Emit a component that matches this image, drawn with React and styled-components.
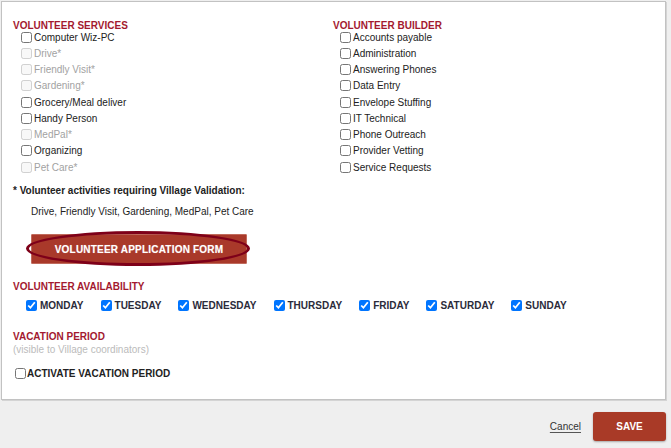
import React from 'react';
import styled, { createGlobalStyle } from 'styled-components';

const GlobalStyle = createGlobalStyle`
  html, body {
    margin: 0;
    padding: 0;
    background: #efefef;
    font-family: 'Liberation Sans', Arial, sans-serif;
  }
`;

const Page = styled.div`
  width: 671px;
  height: 448px;
  display: flex;
  flex-direction: column;
  box-sizing: border-box;
  padding: 1px 0 0 1px;
`;

const Panel = styled.div`
  width: 665px;
  height: 399px;
  box-sizing: border-box;
  background: #fff;
  border: 1px solid #c2c2c2;
  box-shadow: 1px 1px 0 #d4d4d4;
  padding: 18px 11px 0 11px;
`;

const Columns = styled.div`
  display: grid;
  grid-template-columns: 320px 1fr;
`;

const Heading = styled.div`
  color: #a3192f;
  font-size: 10px;
  font-weight: bold;
  line-height: 12px;
`;

const Note = styled.div`
  color: #bbb;
  font-size: 10px;
  line-height: 12px;
  margin-top: 1px;
`;

const List = styled.div`
  display: flex;
  flex-direction: column;
  padding-left: ${p => p.$indent}px;
  margin-top: -3px;
`;

const Item = styled.label`
  display: flex;
  align-items: center;
  height: 16.25px;
  font-size: 10px;
  color: ${p => (p.$disabled ? '#a2a2a2' : '#222')};
  gap: 1px;
`;

const Box = styled.input.attrs({ type: 'checkbox' })`
  width: 11px;
  height: 11px;
  margin: 0 ${p => p.$gap ?? 1}px 0 0;
`;

const Validation = styled.div`
  margin-top: 10px;
  font-size: 10px;
  font-weight: bold;
  color: #222;
  line-height: 12px;
`;

const ValidationList = styled.div`
  margin-top: 9px;
  padding-left: 18px;
  font-size: 10px;
  color: #222;
  line-height: 12px;
`;

const FormButtonWrap = styled.div`
  padding: 16px 0 0 18px;
`;

const FormButton = styled.button`
  position: relative;
  width: 216px;
  height: 30px;
  background: #a9392a;
  border: 1px solid #c06a5c;
  border-radius: 1px;
  color: #fff;
  font-family: 'Liberation Sans', Arial, sans-serif;
  font-size: 10px;
  font-weight: bold;
  letter-spacing: 0.2px;
  text-shadow: 0 0 1px rgba(255, 255, 255, 0.4);
  padding: 0;
  cursor: pointer;

  /* hand-drawn ring around the button */
  &::after {
    content: '';
    position: absolute;
    left: -6px;
    right: -4px;
    top: -4px;
    bottom: -3px;
    border: 3px solid #7e0019;
    border-radius: 50%;
    pointer-events: none;
  }
`;

const Section = styled.div`
  margin-top: ${p => p.$top}px;
`;

const Days = styled.div`
  display: flex;
  align-items: center;
  padding-left: 13px;
  margin-top: 5px;
  gap: 17px;
`;

const Day = styled.label`
  display: flex;
  align-items: center;
  font-size: 10px;
  font-weight: bold;
  color: #2b2b3a;
  height: 14px;
`;

const Activate = styled.label`
  display: flex;
  align-items: center;
  margin: 10px 0 0 2px;
  font-size: 10px;
  font-weight: bold;
  color: #222;
  height: 14px;
`;

const Footer = styled.div`
  flex: 1;
  display: flex;
  align-items: flex-start;
  justify-content: flex-end;
  gap: 12px;
  padding: 12px 5px 0 0;
`;

const CancelLink = styled.a`
  font-size: 10px;
  color: #333;
  text-decoration: underline;
  text-decoration-color: #555;
  text-underline-offset: 2px;
  margin-top: 9px;
  cursor: pointer;
`;

const SaveButton = styled.button`
  width: 73px;
  height: 29px;
  background: #a93a27;
  border: none;
  border-radius: 3px;
  box-shadow: 0 1px 2px rgba(0, 0, 0, 0.3);
  color: #fff;
  font-family: 'Liberation Sans', Arial, sans-serif;
  font-size: 10px;
  font-weight: bold;
  padding: 0;
`;

const services = [
  ['Computer Wiz-PC', false],
  ['Drive*', true],
  ['Friendly Visit*', true],
  ['Gardening*', true],
  ['Grocery/Meal deliver', false],
  ['Handy Person', false],
  ['MedPal*', true],
  ['Organizing', false],
  ['Pet Care*', true],
];

const builder = [
  'Accounts payable',
  'Administration',
  'Answering Phones',
  'Data Entry',
  'Envelope Stuffing',
  'IT Technical',
  'Phone Outreach',
  'Provider Vetting',
  'Service Requests',
];

const days = ['MONDAY', 'TUESDAY', 'WEDNESDAY', 'THURSDAY', 'FRIDAY', 'SATURDAY', 'SUNDAY'];

export default function App() {
  return (
    <>
      <GlobalStyle />
      <Page>
        <Panel>
          <Columns>
            <div>
              <Heading>VOLUNTEER SERVICES</Heading>
              <List $indent={8}>
                {services.map(([name, disabled]) => (
                  <Item key={name} $disabled={disabled}>
                    <Box disabled={disabled} />
                    {name}
                  </Item>
                ))}
              </List>
            </div>
            <div>
              <Heading>VOLUNTEER BUILDER</Heading>
              <List $indent={7}>
                {builder.map(name => (
                  <Item key={name}>
                    <Box />
                    {name}
                  </Item>
                ))}
              </List>
            </div>
          </Columns>

          <Validation>* Volunteer activities requiring Village Validation:</Validation>
          <ValidationList>Drive, Friendly Visit, Gardening, MedPal, Pet Care</ValidationList>

          <FormButtonWrap>
            <FormButton>VOLUNTEER APPLICATION FORM</FormButton>
          </FormButtonWrap>

          <Section $top={17}>
            <Heading>VOLUNTEER AVAILABILITY</Heading>
            <Days>
              {days.map(d => (
                <Day key={d}>
                  <Box defaultChecked $gap={3} />
                  {d}
                </Day>
              ))}
            </Days>
          </Section>

          <Section $top={19}>
            <Heading>VACATION PERIOD</Heading>
            <Note>(visible to Village coordinators)</Note>
            <Activate>
              <Box $gap={1} />
              ACTIVATE VACATION PERIOD
            </Activate>
          </Section>
        </Panel>
        <Footer>
          <CancelLink>Cancel</CancelLink>
          <SaveButton>SAVE</SaveButton>
        </Footer>
      </Page>
    </>
  );
}
